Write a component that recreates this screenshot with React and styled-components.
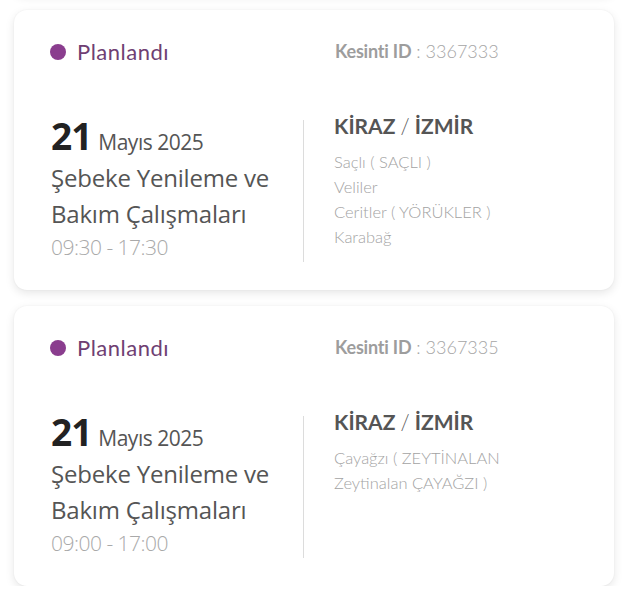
import React from 'react';
import styled, { createGlobalStyle } from 'styled-components';

const outages = [
    {
        id: '3367333',
        day: '21',
        month: 'Mayıs 2025',
        time: '09:30 - 17:30',
        places: ['Saçlı ( SAÇLI )', 'Veliler', 'Ceritler ( YÖRÜKLER )', 'Karabağ'],
    },
    {
        id: '3367335',
        day: '21',
        month: 'Mayıs 2025',
        time: '09:00 - 17:00',
        places: ['Çayağzı ( ZEYTİNALAN', 'Zeytinalan ÇAYAĞZI )'],
    },
];

const OutageCard = ({ item }) => (
    <Card>
        <Header>
            <Status>
                <Dot />
                Planlandı
            </Status>
            <OutageId>
                <b>Kesinti ID</b> : {item.id}
            </OutageId>
        </Header>
        <Body>
            <Left>
                <DateLine>
                    <Day>{item.day}</Day>
                    <Month>{item.month}</Month>
                </DateLine>
                <Title>Şebeke Yenileme ve Bakım Çalışmaları</Title>
                <Time>{item.time}</Time>
            </Left>
            <Divider />
            <Right>
                <City>
                    KİRAZ <Slash>/</Slash> İZMİR
                </City>
                {item.places.map((p) => (
                    <Place key={p}>{p}</Place>
                ))}
            </Right>
        </Body>
    </Card>
);

const App = () => {
    return (
        <>
            <GlobalStyle />
            <List>
                {outages.map((o) => (
                    <OutageCard key={o.id} item={o} />
                ))}
            </List>
        </>
    );
};

const GlobalStyle = createGlobalStyle`
    html, body {
        margin: 0;
        padding: 0;
        background: #ffffff;
        overflow: hidden;
    }
    * {
        box-sizing: border-box;
    }
`;

const List = styled.div`
    display: flex;
    flex-direction: column;
    gap: 16px;
    padding: 0 13px 0 14px;

    /* bottom edge of the previous card, scrolled out of view */
    &::before {
        content: '';
        display: block;
        height: 20px;
        margin-top: -26px;
        border-radius: 13px;
        background: #ffffff;
        box-shadow: 0 3px 10px rgba(0, 0, 0, 0.1), 0 0 2px rgba(0, 0, 0, 0.06);
    }
`;

const Card = styled.div`
    height: 280px;
    background: #ffffff;
    border-radius: 13px;
    box-shadow: 0 3px 10px rgba(0, 0, 0, 0.1), 0 0 2px rgba(0, 0, 0, 0.06);
    padding: 28px 36px 0 36px;
`;

const Header = styled.div`
    display: grid;
    grid-template-columns: 285px 1fr;
    align-items: center;
    height: 24px;
`;

const Status = styled.div`
    display: flex;
    align-items: center;
    gap: 11px;
    font-family: 'Lato', sans-serif;
    font-size: 22px;
    letter-spacing: 0.5px;
    color: #6f3f73;
`;

const Dot = styled.span`
    width: 16px;
    height: 16px;
    border-radius: 50%;
    background: #8a3d8e;
`;

const OutageId = styled.div`
    font-family: 'Lato', sans-serif;
    font-size: 18px;
    font-weight: 300;
    color: #a5a5a5;
    margin-top: -2px;

    b {
        font-weight: 700;
        color: #9d9d9d;
        letter-spacing: -0.2px;
    }
`;

const Body = styled.div`
    display: grid;
    grid-template-columns: 253px 1px 1fr;
    margin-top: 54px;
`;

const Left = styled.div`
    display: flex;
    flex-direction: column;
    padding-left: 1px;
    font-family: 'Open Sans', sans-serif;
`;

const DateLine = styled.div`
    display: flex;
    align-items: baseline;
    gap: 7px;
    line-height: 40px;
`;

const Day = styled.span`
    font-size: 37px;
    font-weight: 700;
    color: #222222;
    letter-spacing: -1px;
`;

const Month = styled.span`
    font-size: 21px;
    color: #555555;
    letter-spacing: -0.5px;
`;

const Title = styled.div`
    font-size: 24px;
    line-height: 36px;
    color: #555555;
    letter-spacing: -0.2px;
    margin-top: -2px;
`;

const Time = styled.div`
    font-size: 21px;
    font-weight: 300;
    line-height: 30px;
    color: #a9a9a9;
    letter-spacing: -0.5px;
`;

const Divider = styled.div`
    width: 1px;
    background: #dcdcdc;
    margin-top: 4px;
`;

const Right = styled.div`
    display: flex;
    flex-direction: column;
    padding-left: 30px;
    font-family: 'Lato', sans-serif;
`;

const City = styled.div`
    font-size: 21px;
    font-weight: 700;
    color: #555555;
    line-height: 24px;
    margin-top: -2px;
    margin-bottom: 12px;
`;

const Slash = styled.span`
    font-weight: 300;
`;

const Place = styled.div`
    font-size: 16.5px;
    font-weight: 300;
    line-height: 25px;
    color: #a3a3a3;
`;

export default App;
